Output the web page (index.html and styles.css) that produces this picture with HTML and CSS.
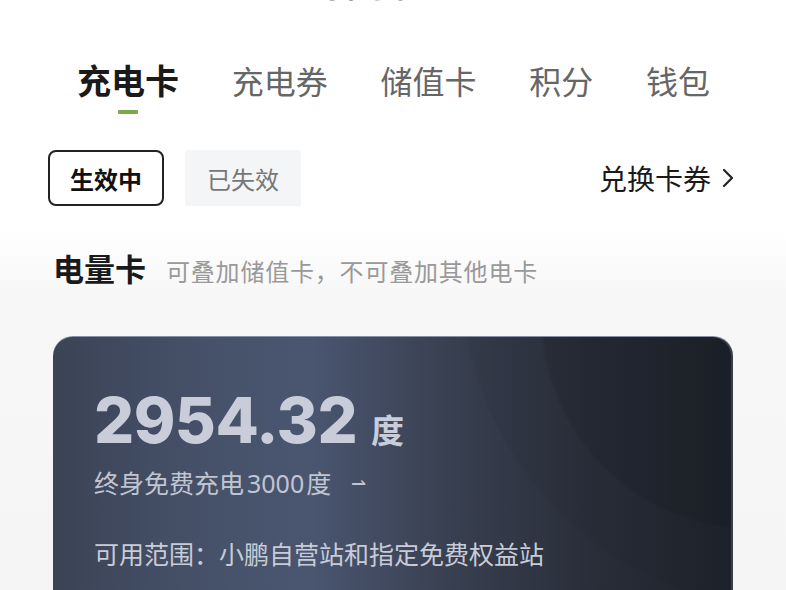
FILE: index.html
```html
<!DOCTYPE html>
<html lang="zh-CN">
<head>
<meta charset="utf-8">
<title>卡包</title>
<link rel="stylesheet" href="styles.css">
</head>
<body>
<div class="page">
  <header class="topbar">
    <span class="back">&lt;</span>
    <span class="title">我的卡包</span>
    <span class="help">使用说明</span>
  </header>

  <nav class="tabs">
    <div class="tab active"><span>充电卡</span><i class="indicator"></i></div>
    <div class="tab"><span>充电券</span></div>
    <div class="tab"><span>储值卡</span></div>
    <div class="tab"><span>积分</span></div>
    <div class="tab"><span>钱包</span></div>
  </nav>

  <div class="filters">
    <div class="pills">
      <span class="pill on">生效中</span>
      <span class="pill off">已失效</span>
    </div>
    <a class="redeem">兑换卡券
      <svg class="chev" viewBox="0 0 14 22" width="14" height="22"><path d="M3 3 L11 11 L3 19" fill="none" stroke="#222" stroke-width="2.2" stroke-linecap="round" stroke-linejoin="round"/></svg>
    </a>
  </div>

  <section class="section">
    <div class="sec-head">
      <h2>电量卡</h2>
      <span class="sec-sub">可叠加储值卡，不可叠加其他电卡</span>
    </div>

    <div class="card">
      <div class="amount"><span class="num">2954.32</span><span class="unit">度</span></div>
      <div class="plan">终身免费充电<span class="digits">3000</span>度 <span class="arrow">⇀</span></div>
      <div class="scope">可用范围：小鹏自营站和指定免费权益站</div>
    </div>
  </section>
</div>
</body>
</html>
```

FILE: styles.css
```css
* { box-sizing: border-box; }
html, body { margin: 0; padding: 0; }
body {
  width: 786px;
  height: 590px;
  overflow: hidden;
  font-family: "Noto Sans CJK SC", "Noto Sans", sans-serif;
  color: #222;
  background: #fff;
}
.page {
  min-height: 590px;
  background: linear-gradient(#fff 0px, #fff 265px, #f7f7f8 330px, #f5f5f6 590px);
}

.topbar {
  height: 40px;
  margin-top: -36px;
  display: flex;
  align-items: center;
  justify-content: space-between;
  padding: 0 82px 0 75px;
  font-size: 30px;
  line-height: 40px;
  color: #777;
}
.topbar .back { font-family: "DejaVu Sans", sans-serif; font-weight: 700; color: #222; }
.topbar .title { font-weight: 600; margin-left: 80px; }
.topbar .help { font-size: 28px; }

.tabs {
  display: flex;
  justify-content: space-between;
  align-items: flex-start;
  padding: 0 76px 0 77px;
  margin-top: 52px;
  height: 94px;
}
.tab {
  display: flex;
  flex-direction: column;
  align-items: center;
  font-size: 32px;
  line-height: 48px;
  color: #666;
}
.tab.active {
  font-size: 34px;
  font-weight: 700;
  color: #1a1a1a;
}
.indicator {
  display: block;
  width: 20px;
  height: 4px;
  margin-top: 6px;
  background: #7aa84a;
  border-radius: 1px;
}

.filters {
  display: flex;
  align-items: center;
  justify-content: space-between;
  padding: 0 51px 0 48px;
  height: 56px;
}
.pills { display: flex; gap: 21px; }
.pill {
  width: 116px;
  height: 56px;
  display: flex;
  align-items: center;
  justify-content: center;
  font-size: 24px;
  border-radius: 8px;
}
.pill.on {
  border: 2px solid #222;
  font-weight: 700;
  color: #111;
}
.pill.off {
  background: #f4f5f7;
  color: #777;
  border-radius: 2px;
}
.redeem {
  display: flex;
  align-items: center;
  gap: 10px;
  font-size: 28px;
  color: #1a1a1a;
}

.section { padding: 0 53px; }
.sec-head {
  display: flex;
  align-items: baseline;
  gap: 20px;
  margin-top: 40px;
  padding-left: 0;
  height: 44px;
}
.sec-head h2 {
  margin: 0;
  font-size: 31px;
  font-weight: 700;
  line-height: 44px;
  color: #1a1a1a;
}
.sec-sub {
  font-size: 24px;
  letter-spacing: 0.8px;
  color: #999;
}

.card {
  margin-top: 46px;
  height: 300px;
  border-radius: 20px;
  padding: 47px 40px 0 41px;
  color: #c5cad6;
  border-top: 1px solid #8790a6;
  background:
    radial-gradient(circle at 700px -20px, rgba(10,12,18,0.12) 0, rgba(10,12,18,0.12) 210px, rgba(0,0,0,0) 213px),
    radial-gradient(circle at 740px -60px, rgba(20,24,32,0.08) 0, rgba(20,24,32,0.08) 330px, rgba(0,0,0,0) 333px),
    linear-gradient(90deg, #3b4356 0%, #465169 22%, #4a5570 38%, #373e4e 60%, #282d38 80%, #1e222a 100%);
  box-shadow: inset -2px 0 0 rgba(150,160,185,0.25);
}
.amount {
  display: flex;
  align-items: baseline;
  gap: 14px;
  height: 72px;
}
.num {
  font-family: "Inter", "Roboto", sans-serif;
  font-weight: 800;
  font-size: 63px;
  line-height: 72px;
  letter-spacing: -0.5px;
  color: #c8cdd9;
}
.unit {
  font-size: 33px;
  font-weight: 700;
  color: #c8cdd9;
}
.plan {
  margin-top: 10px;
  font-size: 25px;
  line-height: 32px;
  color: #c0c5d1;
}
.plan .digits { margin-left: 3px; margin-right: 2px; font-family: "Noto Sans", sans-serif; }
.plan .arrow { font-size: 18px; margin-left: 14px; vertical-align: 3px; }
.scope {
  margin-top: 38px;
  font-size: 25px;
  line-height: 32px;
  color: #c8ccd6;
}
```
